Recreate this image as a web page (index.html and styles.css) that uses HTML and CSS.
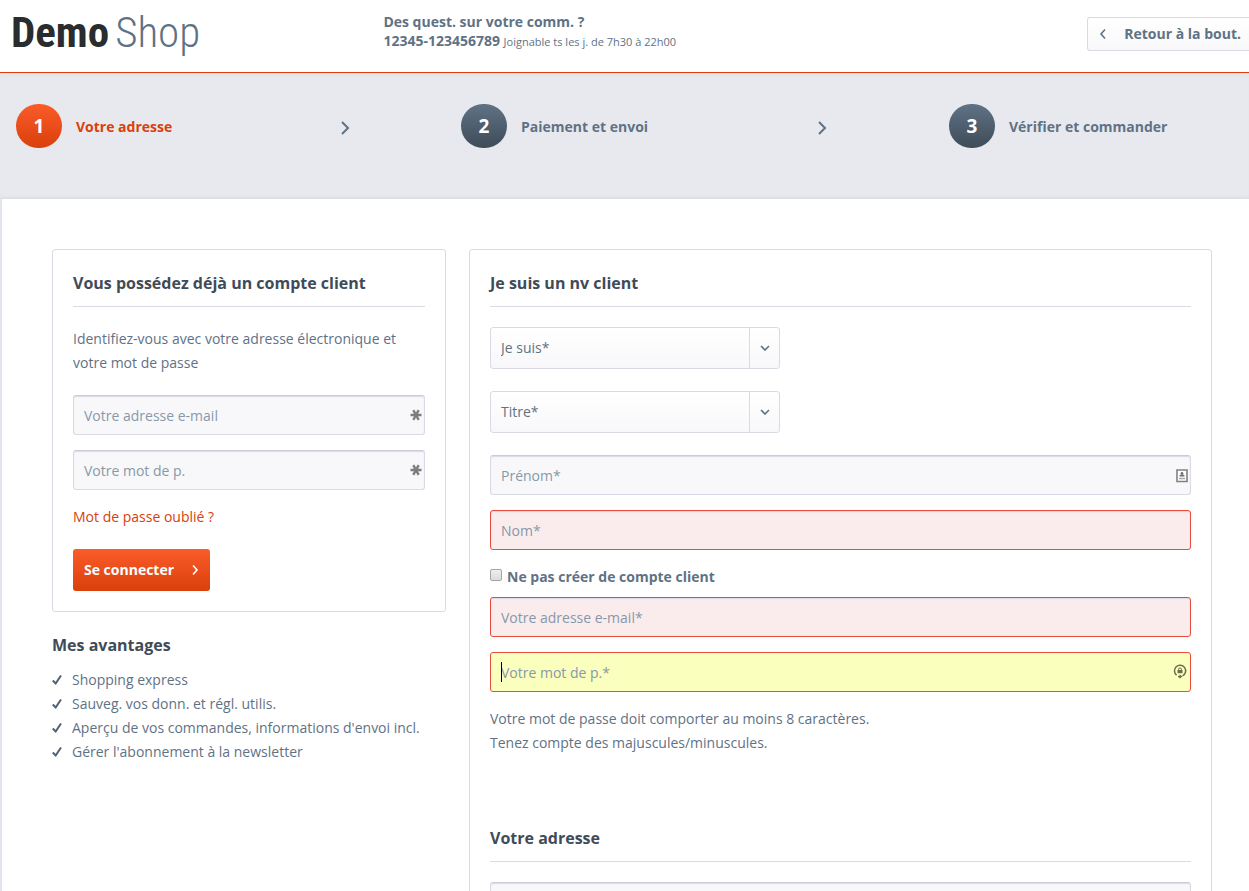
FILE: index.html
```html
<!DOCTYPE html>
<html lang="fr">
<head>
<meta charset="utf-8">
<title>DemoShop</title>
<link rel="stylesheet" href="styles.css">
</head>
<body>
<header class="header">
  <a class="logo" href="#"><span class="logo-strong">Demo</span><span class="logo-light">Shop</span></a>
  <div class="support">
    <strong>Des quest. sur votre comm. ?</strong>
    <div><strong>12345-123456789</strong> <small>Joignable ts les j. de 7h30 à 22h00</small></div>
  </div>
  <a class="back" href="#"><svg width="8" height="12" viewBox="0 0 8 12"><path d="M6 1.500 2 6l4 4.500"/></svg>Retour à la bout.</a>
</header>

<nav class="steps">
  <div class="step step-active"><span class="step-number">1</span><span class="step-label">Votre adresse</span><svg class="step-arrow" width="10" height="16" viewBox="0 0 10 16"><path d="M2 2l6 6-6 6"/></svg></div>
  <div class="step"><span class="step-number">2</span><span class="step-label">Paiement et envoi</span><svg class="step-arrow" width="10" height="16" viewBox="0 0 10 16"><path d="M2 2l6 6-6 6"/></svg></div>
  <div class="step"><span class="step-number">3</span><span class="step-label">Vérifier et commander</span></div>
</nav>

<main class="content">
  <aside class="side">
    <form class="card">
      <h2 class="card-title">Vous possédez déjà un compte client</h2>
      <p class="text">Identifiez-vous avec votre adresse électronique et votre mot de passe</p>
      <div class="login-fields">
        <div class="field">
          <input class="input" type="email" placeholder="Votre adresse e-mail" aria-label="Votre adresse e-mail">
          <svg class="field-icon" width="12" height="12" viewBox="0 0 12 12" stroke="#7d7d7d" stroke-width="2.400"><path d="M.5 6h11M3.300 1.200l5.400 9.600M8.700 1.200 3.300 10.800"/></svg>
        </div>
        <div class="field">
          <input class="input" type="password" placeholder="Votre mot de p." aria-label="Votre mot de p.">
          <svg class="field-icon" width="12" height="12" viewBox="0 0 12 12" stroke="#7d7d7d" stroke-width="2.400"><path d="M.5 6h11M3.300 1.200l5.400 9.600M8.700 1.200 3.300 10.800"/></svg>
        </div>
      </div>
      <a class="forgot" href="#">Mot de passe oublié ?</a>
      <button class="login" type="button">Se connecter<svg width="8" height="12" viewBox="0 0 8 12"><path d="M2 1.500 6 6l-4 4.500"/></svg></button>
    </form>
    <h2 class="benefits-title">Mes avantages</h2>
    <ul class="benefits">
      <li><svg width="10" height="12" viewBox="0 0 10 12"><path d="M.8 6.500 3.700 9.500 9 1.500"/></svg>Shopping express</li>
      <li><svg width="10" height="12" viewBox="0 0 10 12"><path d="M.8 6.500 3.700 9.500 9 1.500"/></svg>Sauveg. vos donn. et régl. utilis.</li>
      <li><svg width="10" height="12" viewBox="0 0 10 12"><path d="M.8 6.500 3.700 9.500 9 1.500"/></svg>Aperçu de vos commandes, informations d'envoi incl.</li>
      <li><svg width="10" height="12" viewBox="0 0 10 12"><path d="M.8 6.500 3.700 9.500 9 1.500"/></svg>Gérer l'abonnement à la newsletter</li>
    </ul>
  </aside>

  <form class="card register">
    <h2 class="card-title">Je suis un nv client</h2>
    <div class="select-box">
      <select class="select" aria-label="Je suis"><option>Je suis*</option></select>
      <span class="select-arrow"><svg width="10" height="6" viewBox="0 0 10 6"><path d="M1 1l4 4 4-4"/></svg></span>
    </div>
    <div class="select-box">
      <select class="select" aria-label="Titre"><option>Titre*</option></select>
      <span class="select-arrow"><svg width="10" height="6" viewBox="0 0 10 6"><path d="M1 1l4 4 4-4"/></svg></span>
    </div>
    <div class="field">
      <input class="input" type="text" placeholder="Prénom*" aria-label="Prénom">
      <svg class="field-icon" width="12" height="14" viewBox="0 0 12 14"><path d="M1 1h10v11.500H1z" fill="#fff" stroke="#808080" stroke-width="1.600"/><circle cx="6" cy="4.300" r="1.300" fill="#707070"/><path d="M3.500 7.500V6.200Q6 4.500 8.500 6.200v1.300z" fill="#707070"/><path d="M3 9.500h6" stroke="#aaa" stroke-width="1.600"/></svg>
    </div>
    <div class="field">
      <input class="input input-error" type="text" placeholder="Nom*" aria-label="Nom">
    </div>
    <label class="check"><input class="check-box" type="checkbox">Ne pas créer de compte client</label>
    <div class="field">
      <input class="input input-error" type="email" placeholder="Votre adresse e-mail*" aria-label="Votre adresse e-mail">
    </div>
    <div class="field">
      <input class="input input-focus" type="password" placeholder="Votre mot de p.*" aria-label="Votre mot de p.">
      <span class="caret"></span>
      <svg class="field-icon field-icon-lock" width="14" height="15" viewBox="0 0 14 15" fill="none" stroke="#6b6e4e"><path d="M3.600 11.200A5.600 5.600 0 1 1 9.600 11.800" stroke-width="1.500"/><path d="M5 12.600h3" stroke-width="1.500"/><path d="M6.500 10.400v4.400l3-2.200z" fill="#6b6e4e" stroke="none"/><path d="M4.500 6h5v3.200h-5z" fill="#6b6e4e" stroke="none"/><path d="M5.600 6V5.200q0-1.200 1.400-1.200t1.400 1.200V6"/></svg>
    </div>
    <p class="text">Votre mot de passe doit comporter au moins 8 caractères.<br>Tenez compte des majuscules/minuscules.</p>
    <h2 class="card-title address-title">Votre adresse</h2>
    <div class="field"><input class="input" type="text" aria-label="Rue et numéro"></div>
  </form>
</main>
</body>
</html>
```
FILE: styles.css
```css
* {
  box-sizing: border-box;
}

body {
  margin: 0;
  height: 100vh;
  overflow: hidden;
  background: #e8e9ee;
  color: #5f7285;
  font: 14px/24px "Open Sans", "Noto Sans", sans-serif;
}

h2, p, ul {
  margin: 0;
  padding: 0;
}

a {
  text-decoration: none;
}

svg {
  flex: none;
}

.header {
  position: relative;
  display: flex;
  align-items: flex-start;
  height: 73px;
  padding-left: 11px;
  background: #fff;
  border-bottom: 1px solid #d9400b;
  box-shadow: 0 1px 4px #dadae5;
}

.logo {
  display: flex;
  gap: 6px;
  flex: 0 0 30%;
  padding-top: 7px;
  font: 43px/50px "Liberation Sans Narrow", "Roboto Condensed", Roboto, sans-serif;
}

.logo-strong {
  color: #292d2f;
  font-weight: 700;
}

.logo-light {
  color: #5f7285;
  font-weight: 300;
}

.support {
  flex: 1;
  padding: 12px 0 0 1px;
  line-height: 19px;
}

.support small {
  font-size: 11px;
}

.back {
  display: flex;
  align-items: center;
  gap: 17px;
  height: 34px;
  margin-top: 17px;
  padding: 0 8px 0 11px;
  border: 1px solid #dadae5;
  border-right: 0;
  border-radius: 3px 0 0 3px;
  background: linear-gradient(#fff, #f8f8fa);
  color: #5f7285;
  font-weight: 700;
}

.back svg,
.login svg,
.select-arrow svg {
  fill: none;
  stroke: currentColor;
  stroke-width: 1.6;
}

.steps {
  display: grid;
  grid-template-columns: 445fr 488fr 300fr;
  padding: 31px 0 51px 16px;
  font-weight: 700;
  box-shadow: inset 0 -4px 4px -3px #dadae5;
}

.step {
  display: flex;
  align-items: center;
}

.step-number {
  width: 46px;
  height: 44px;
  margin-right: 14px;
  border-radius: 22px;
  background: linear-gradient(#5f7285, #3f4c58);
  color: #fff;
  font-size: 19px;
  line-height: 44px;
  text-align: center;
}

.step-label {
  padding-top: 2px;
}

.step-active {
  color: #d9400b;
}

.step-active .step-number {
  background: linear-gradient(#fb5c29, #d9400b);
}

.step-arrow {
  margin: 4px 25% 0 auto;
  fill: none;
  stroke: #5f7285;
  stroke-width: 2;
}

.content {
  display: grid;
  grid-template-columns: 394fr 743fr;
  gap: 23px;
  align-items: start;
  margin-left: 2px;
  padding: 50px 37px 0 50px;
  background: #fff;
  box-shadow: 0 0 4px #dadae5;
}

.card {
  padding: 21px 20px 20px;
  border: 1px solid #dadae5;
  border-radius: 3px;
}

.card-title {
  margin-bottom: 20px;
  padding-bottom: 11px;
  border-bottom: 1px solid #dadae5;
  color: #3f4c58;
  font-size: 16px;
  line-height: 24px;
}

.login-fields {
  margin: 20px 0 15px;
}

.field {
  position: relative;
  margin-bottom: 15px;
}

.input {
  display: block;
  width: 100%;
  height: 40px;
  padding: 0 10px;
  border: 1px solid #dadae5;
  border-top-color: #cbcbdb;
  border-radius: 3px;
  outline: 0;
  background: #f8f8fa;
  box-shadow: inset 0 1px 1px #dadae5;
  color: #5f7285;
  font: inherit;
}

.input::placeholder {
  color: #8798a9;
  opacity: 1;
}

.input-error {
  border-color: #e74c3c;
  background: #faecec;
}

.input-focus {
  border-color: #e74c3c;
  background: #faffbd;
  box-shadow: none;
}

.field-icon {
  position: absolute;
  top: 14px;
  right: 3px;
}

.field-icon-lock {
  top: 12px;
  right: 4px;
}

.caret {
  position: absolute;
  top: 10px;
  left: 11px;
  width: 1px;
  height: 20px;
  background: #000;
}

.forgot {
  display: block;
  color: #d9400b;
}

.login {
  display: flex;
  align-items: center;
  gap: 17px;
  height: 42px;
  margin-top: 20px;
  padding: 0 11px;
  border: 0;
  border-radius: 3px;
  background: linear-gradient(#fb5c29, #d9400b);
  color: #fff;
  font: inherit;
  font-weight: 700;
}

.benefits-title {
  margin: 21px 0 11px;
  color: #3f4c58;
  font-size: 16px;
  line-height: 24px;
}

.benefits {
  list-style: none;
}

.benefits li {
  display: flex;
  align-items: center;
  gap: 10px;
}

.benefits svg {
  fill: none;
  stroke: #4f6172;
  stroke-width: 2;
}

.select-box {
  position: relative;
  width: 290px;
  margin-bottom: 22px;
}

.select {
  display: block;
  width: 100%;
  height: 42px;
  padding: 0 40px 0 10px;
  appearance: none;
  border: 1px solid #dadae5;
  border-radius: 3px;
  background: linear-gradient(#fff, #f8f8fa);
  color: #5f7285;
  font: inherit;
}

.select-arrow {
  position: absolute;
  top: 1px;
  right: 1px;
  bottom: 1px;
  display: flex;
  align-items: center;
  justify-content: center;
  width: 30px;
  border-left: 1px solid #dadae5;
  pointer-events: none;
}

.check {
  display: flex;
  align-items: center;
  gap: 5px;
  margin-bottom: 8px;
  font-weight: 700;
}

.check-box {
  width: 12px;
  height: 12px;
  margin: 0 0 4px;
  appearance: none;
  border: 1px solid #a5a5a5;
  border-radius: 2px;
  background: linear-gradient(#eee, #dcdcdc);
}

.address-title {
  margin-top: 71px;
}
```
